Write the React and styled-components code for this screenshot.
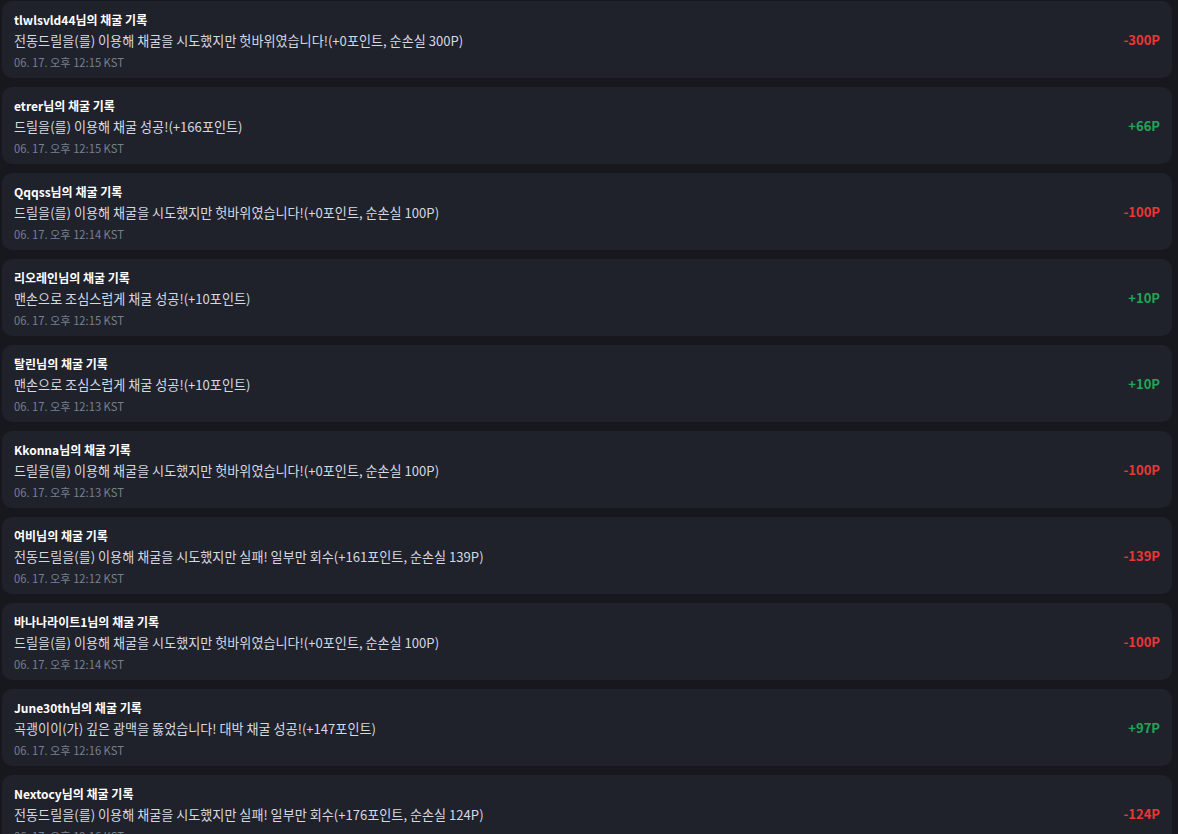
import React from 'react';
import styled, { createGlobalStyle } from 'styled-components';

const logs = [
  { user: 'tlwlsvld44', msg: '전동드릴을(를) 이용해 채굴을 시도했지만 헛바위였습니다!(+0포인트, 순손실 300P)', time: '06. 17. 오후 12:15 KST', amount: -300 },
  { user: 'etrer', msg: '드릴을(를) 이용해 채굴 성공!(+166포인트)', time: '06. 17. 오후 12:15 KST', amount: 66 },
  { user: 'Qqqss', msg: '드릴을(를) 이용해 채굴을 시도했지만 헛바위였습니다!(+0포인트, 순손실 100P)', time: '06. 17. 오후 12:14 KST', amount: -100 },
  { user: '리오레인', msg: '맨손으로 조심스럽게 채굴 성공!(+10포인트)', time: '06. 17. 오후 12:15 KST', amount: 10 },
  { user: '탈린', msg: '맨손으로 조심스럽게 채굴 성공!(+10포인트)', time: '06. 17. 오후 12:13 KST', amount: 10 },
  { user: 'Kkonna', msg: '드릴을(를) 이용해 채굴을 시도했지만 헛바위였습니다!(+0포인트, 순손실 100P)', time: '06. 17. 오후 12:13 KST', amount: -100 },
  { user: '여비', msg: '전동드릴을(를) 이용해 채굴을 시도했지만 실패! 일부만 회수(+161포인트, 순손실 139P)', time: '06. 17. 오후 12:12 KST', amount: -139 },
  { user: '바나나라이트1', msg: '드릴을(를) 이용해 채굴을 시도했지만 헛바위였습니다!(+0포인트, 순손실 100P)', time: '06. 17. 오후 12:14 KST', amount: -100 },
  { user: 'June30th', msg: '곡괭이이(가) 깊은 광맥을 뚫었습니다! 대박 채굴 성공!(+147포인트)', time: '06. 17. 오후 12:16 KST', amount: 97 },
  { user: 'Nextocy', msg: '전동드릴을(를) 이용해 채굴을 시도했지만 실패! 일부만 회수(+176포인트, 순손실 124P)', time: '06. 17. 오후 12:16 KST', amount: -124 },
];

const GlobalStyle = createGlobalStyle`
  html, body {
    margin: 0;
    background: #16181d;
    height: 100%;
    overflow: hidden;
  }
  body {
    font-family: "Noto Sans CJK KR", "Noto Sans", sans-serif;
  }
`;

const App = () => (
  <>
    <GlobalStyle />
    <List>
      {logs.map((log, i) => (
        <Card key={i}>
          <Info>
            <Title>{log.user}님의 채굴 기록</Title>
            <Message>{log.msg}</Message>
            <Time>{log.time}</Time>
          </Info>
          <Amount $gain={log.amount >= 0}>
            {log.amount >= 0 ? `+${log.amount}P` : `${log.amount}P`}
          </Amount>
        </Card>
      ))}
    </List>
  </>
);

const List = styled.div`
  display: flex;
  flex-direction: column;
  gap: 9px;
  padding: 1px 6px 0 2px;
`;

const Card = styled.div`
  display: flex;
  align-items: center;
  justify-content: space-between;
  background-color: #1f222b;
  border-radius: 10px;
  padding: 9px 12px 9px 12px;
  height: 77px;
  box-sizing: border-box;
`;

const Info = styled.div`
  display: flex;
  flex-direction: column;
`;

const Title = styled.div`
  font-size: 12px;
  font-weight: 700;
  line-height: 20px;
  color: #ffffff;
`;

const Message = styled.div`
  font-size: 13.1px;
  line-height: 21px;
  color: #d5d9e2;
`;

const Time = styled.div`
  margin-top: 3px;
  font-size: 11.2px;
  line-height: 16px;
  color: #76808f;
`;

const Amount = styled.div`
  font-size: 13px;
  font-weight: 700;
  color: ${(p) => (p.$gain ? '#22a557' : '#ef3535')};
`;

export default App;
